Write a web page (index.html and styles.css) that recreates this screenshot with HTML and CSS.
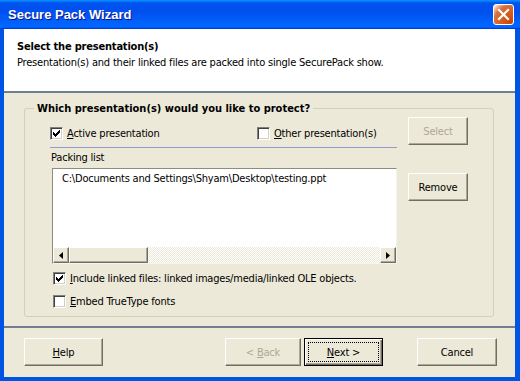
FILE: index.html
```html
<!DOCTYPE html>
<html lang="en">
<head>
    <meta charset="UTF-8">
    <title>Secure Pack Wizard</title>
    <link rel="stylesheet" href="styles.css">
</head>
<body>
    <div class="window">
        <div class="titlebar">
            <span class="title">Secure Pack Wizard</span>
            <button class="close-btn" aria-label="Close">
                <svg width="13" height="13" viewBox="0 0 13 13">
                    <path d="M2 2 L11 11 M11 2 L2 11" stroke="#fff" stroke-width="2.2" stroke-linecap="square" fill="none"/>
                </svg>
            </button>
        </div>

        <div class="client">
            <!-- Wizard page header -->
            <div class="header">
                <div class="header-title">Select the presentation(s)</div>
                <div class="header-sub">Presentation(s) and their linked files are packed into single SecurePack show.</div>
            </div>

            <div class="page">
                <fieldset class="group">
                    <legend>Which presentation(s) would you like to protect?</legend>

                    <div class="group-grid">
                        <div class="opts">
                            <label class="check first">
                                <span class="cb checked">
                                    <svg width="7" height="7" viewBox="0 0 7 7"><path d="M0 2h1v1h1v1h1v-1h1v-1h1v-1h1v-1h1v3h-1v1h-1v1h-1v1h-1v1h-1v-1h-1v-1h-1z" fill="#000"/></svg>
                                </span>
                                <span><u>A</u>ctive presentation</span>
                            </label>
                            <label class="check">
                                <span class="cb"></span>
                                <span><u>O</u>ther presentation(s)</span>
                            </label>
                        </div>
                        <button class="btn disabled">Select</button>

                        <div class="list-area">
                            <div class="list-label">Packing list</div>
                            <div class="listbox">
                                <div class="list-item">C:\Documents and Settings\Shyam\Desktop\testing.ppt</div>
                                <div class="hscroll">
                                    <span class="arrow left"><svg width="4" height="7" viewBox="0 0 4 7"><path d="M4 0v7L0 3.5z" fill="#000"/></svg></span>
                                    <span class="thumb"></span>
                                    <span class="track"></span>
                                    <span class="arrow right"><svg width="4" height="7" viewBox="0 0 4 7"><path d="M0 0v7l4-3.5z" fill="#000"/></svg></span>
                                </div>
                            </div>
                        </div>
                        <button class="btn remove">Remove</button>
                    </div>

                    <label class="check bottom">
                        <span class="cb checked">
                            <svg width="7" height="7" viewBox="0 0 7 7"><path d="M0 2h1v1h1v1h1v-1h1v-1h1v-1h1v-1h1v3h-1v1h-1v1h-1v1h-1v1h-1v-1h-1v-1h-1z" fill="#000"/></svg>
                        </span>
                        <span><u>I</u>nclude linked files: linked images/media/linked OLE objects.</span>
                    </label>
                    <label class="check bottom">
                        <span class="cb"></span>
                        <span><u>E</u>mbed TrueType fonts</span>
                    </label>
                </fieldset>
            </div>

            <div class="footer">
                <button class="btn wide"><u>H</u>elp</button>
                <div class="spacer"></div>
                <button class="btn wide disabled">&lt; <u>B</u>ack</button>
                <button class="btn wide default"><span class="focus"><u>N</u>ext &gt;</span></button>
                <button class="btn wide cancel">Cancel</button>
            </div>
        </div>
    </div>
</body>
</html>
```

FILE: styles.css
```css
* {
    margin: 0;
    padding: 0;
    box-sizing: border-box;
}

body {
    width: 520px;
    height: 381px;
    overflow: hidden;
    font-family: 'DejaVu Sans Condensed', 'Liberation Sans', Arial, sans-serif;
    font-size: 11px;
    letter-spacing: -0.2px;
    color: #000;
}

.window {
    width: 520px;
    height: 381px;
    background: #0054e3;
    display: flex;
    flex-direction: column;
}

/* Title bar */
.titlebar {
    height: 29px;
    flex: none;
    display: flex;
    align-items: center;
    padding: 0 6px 0 8px;
    background: linear-gradient(180deg, #0997ff, #0053ee 10%, #0050ee 40%, #0066ff 88%, #0066ff 93%, #005bff 95%, #003dd7 96%, #003dd7);
}

.title {
    flex: 1;
    color: #fff;
    font-family: 'Liberation Sans', Arial, sans-serif;
    font-weight: bold;
    font-size: 13px;
    letter-spacing: 0;
    text-shadow: 1px 1px #0f1089;
}

.close-btn {
    width: 21px;
    height: 21px;
    border: 1px solid #fff;
    border-radius: 3px;
    display: flex;
    align-items: center;
    justify-content: center;
    background: radial-gradient(circle at 90% 90%, #cc4600 0, #dc6527 55%, #cd7546 70%, #ffccb2 90%, #fff 100%);
}

/* Client area */
.client {
    flex: 1;
    margin: 0 5px 4px 4px;
    background: #ece9d8;
    display: flex;
    flex-direction: column;
}

.header {
    height: 64px;
    flex: none;
    background: #fff;
    padding: 11px 0 0 13px;
    border-bottom: 2px solid #6f7f8f;
    line-height: 13px;
}

.header-title {
    font-weight: bold;
}

.header-sub {
    margin-top: 3px;
}

.page {
    height: 235px;
    flex: none;
    padding: 9px 0 0 20px;
    border-bottom: 2px solid #6f7f8f;
}

/* Group box */
.group {
    width: 470px;
    height: 215px;
    border: 1px solid #d0d0bf;
    border-radius: 3px;
    padding: 0;
}

.group legend {
    margin-left: 9px;
    padding: 0 3px;
    font-weight: bold;
    letter-spacing: 0;
    line-height: 13px;
}

.group-grid {
    display: grid;
    grid-template-columns: 347px 60px;
    column-gap: 11px;
    margin: 2px 0 0 25px;
}

.opts {
    height: 28px;
    display: flex;
    align-items: center;
    padding-top: 4px;
}

.check {
    display: flex;
    align-items: center;
    gap: 4px;
    line-height: 13px;
}

.check.first {
    width: 207px;
}

.cb {
    width: 13px;
    height: 13px;
    flex: none;
    background: #fff;
    border-top: 1px solid #808080;
    border-left: 1px solid #808080;
    border-bottom: 1px solid #fff;
    border-right: 1px solid #fff;
    box-shadow: inset 1px 1px #404040, inset -1px -1px #d4d0c8;
    display: flex;
    align-items: center;
    justify-content: center;
}

.check.bottom {
    margin-left: 28px;
    height: 13px;
}

.check.bottom + .check.bottom {
    margin-top: 10px;
}

.group-grid + .check.bottom {
    margin-top: 8px;
}

/* Buttons */
.btn {
    height: 28px;
    font-family: inherit;
    font-size: 11px;
    letter-spacing: inherit;
    color: #000;
    background: #ece9d8;
    border-top: 1px solid #fff;
    border-left: 1px solid #fff;
    border-bottom: 1px solid #716f64;
    border-right: 1px solid #716f64;
    box-shadow: inset -1px -1px #aca899;
    border-radius: 0;
}

.btn.disabled {
    color: #aca899;
}

.btn.remove {
    margin-top: 28px;
}

.list-area {
    margin-top: 2px;
    border-top: 1px solid #9898d0;
}

.list-label {
    padding: 3px 0 0 1px;
    line-height: 13px;
}

.listbox {
    margin: 4px 0 0 2px;
    width: 345px;
    height: 96px;
    background: #fff;
    border-top: 1px solid #8e8c80;
    border-left: 1px solid #8e8c80;
    border-bottom: 1px solid #f4f3ee;
    border-right: 1px solid #f4f3ee;
    display: flex;
    flex-direction: column;
}

.list-item {
    flex: 1;
    padding: 3px 0 0 9px;
    line-height: 13px;
}

.hscroll {
    height: 16px;
    display: flex;
}

.arrow,
.thumb {
    background: #ece9d8;
    border-top: 1px solid #fff;
    border-left: 1px solid #fff;
    border-bottom: 1px solid #716f64;
    border-right: 1px solid #716f64;
    box-shadow: inset -1px -1px #aca899;
}

.arrow {
    width: 16px;
    display: flex;
    align-items: center;
    justify-content: center;
}

.thumb {
    width: 79px;
}

.track {
    flex: 1;
    background-image: conic-gradient(#fff 25%, #ece9d8 0 50%, #fff 0 75%, #ece9d8 0);
    background-size: 2px 2px;
}

/* Footer */
.footer {
    flex: 1;
    display: flex;
    align-items: flex-start;
    padding: 10px 18px 0 20px;
}

.spacer {
    flex: 1;
}

.btn.wide {
    width: 79px;
}

.btn.wide.disabled {
    margin-right: 3px;
    width: 76px;
}

.btn.default {
    border: 1px solid #000;
    box-shadow: inset 1px 1px #fff, inset -1px -1px #716f64, inset -2px -2px #aca899;
    padding: 3px;
}

.focus {
    display: flex;
    align-items: center;
    justify-content: center;
    height: 100%;
    border: 1px dotted #000;
}

.btn.cancel {
    margin-left: 34px;
    width: 80px;
}
```
